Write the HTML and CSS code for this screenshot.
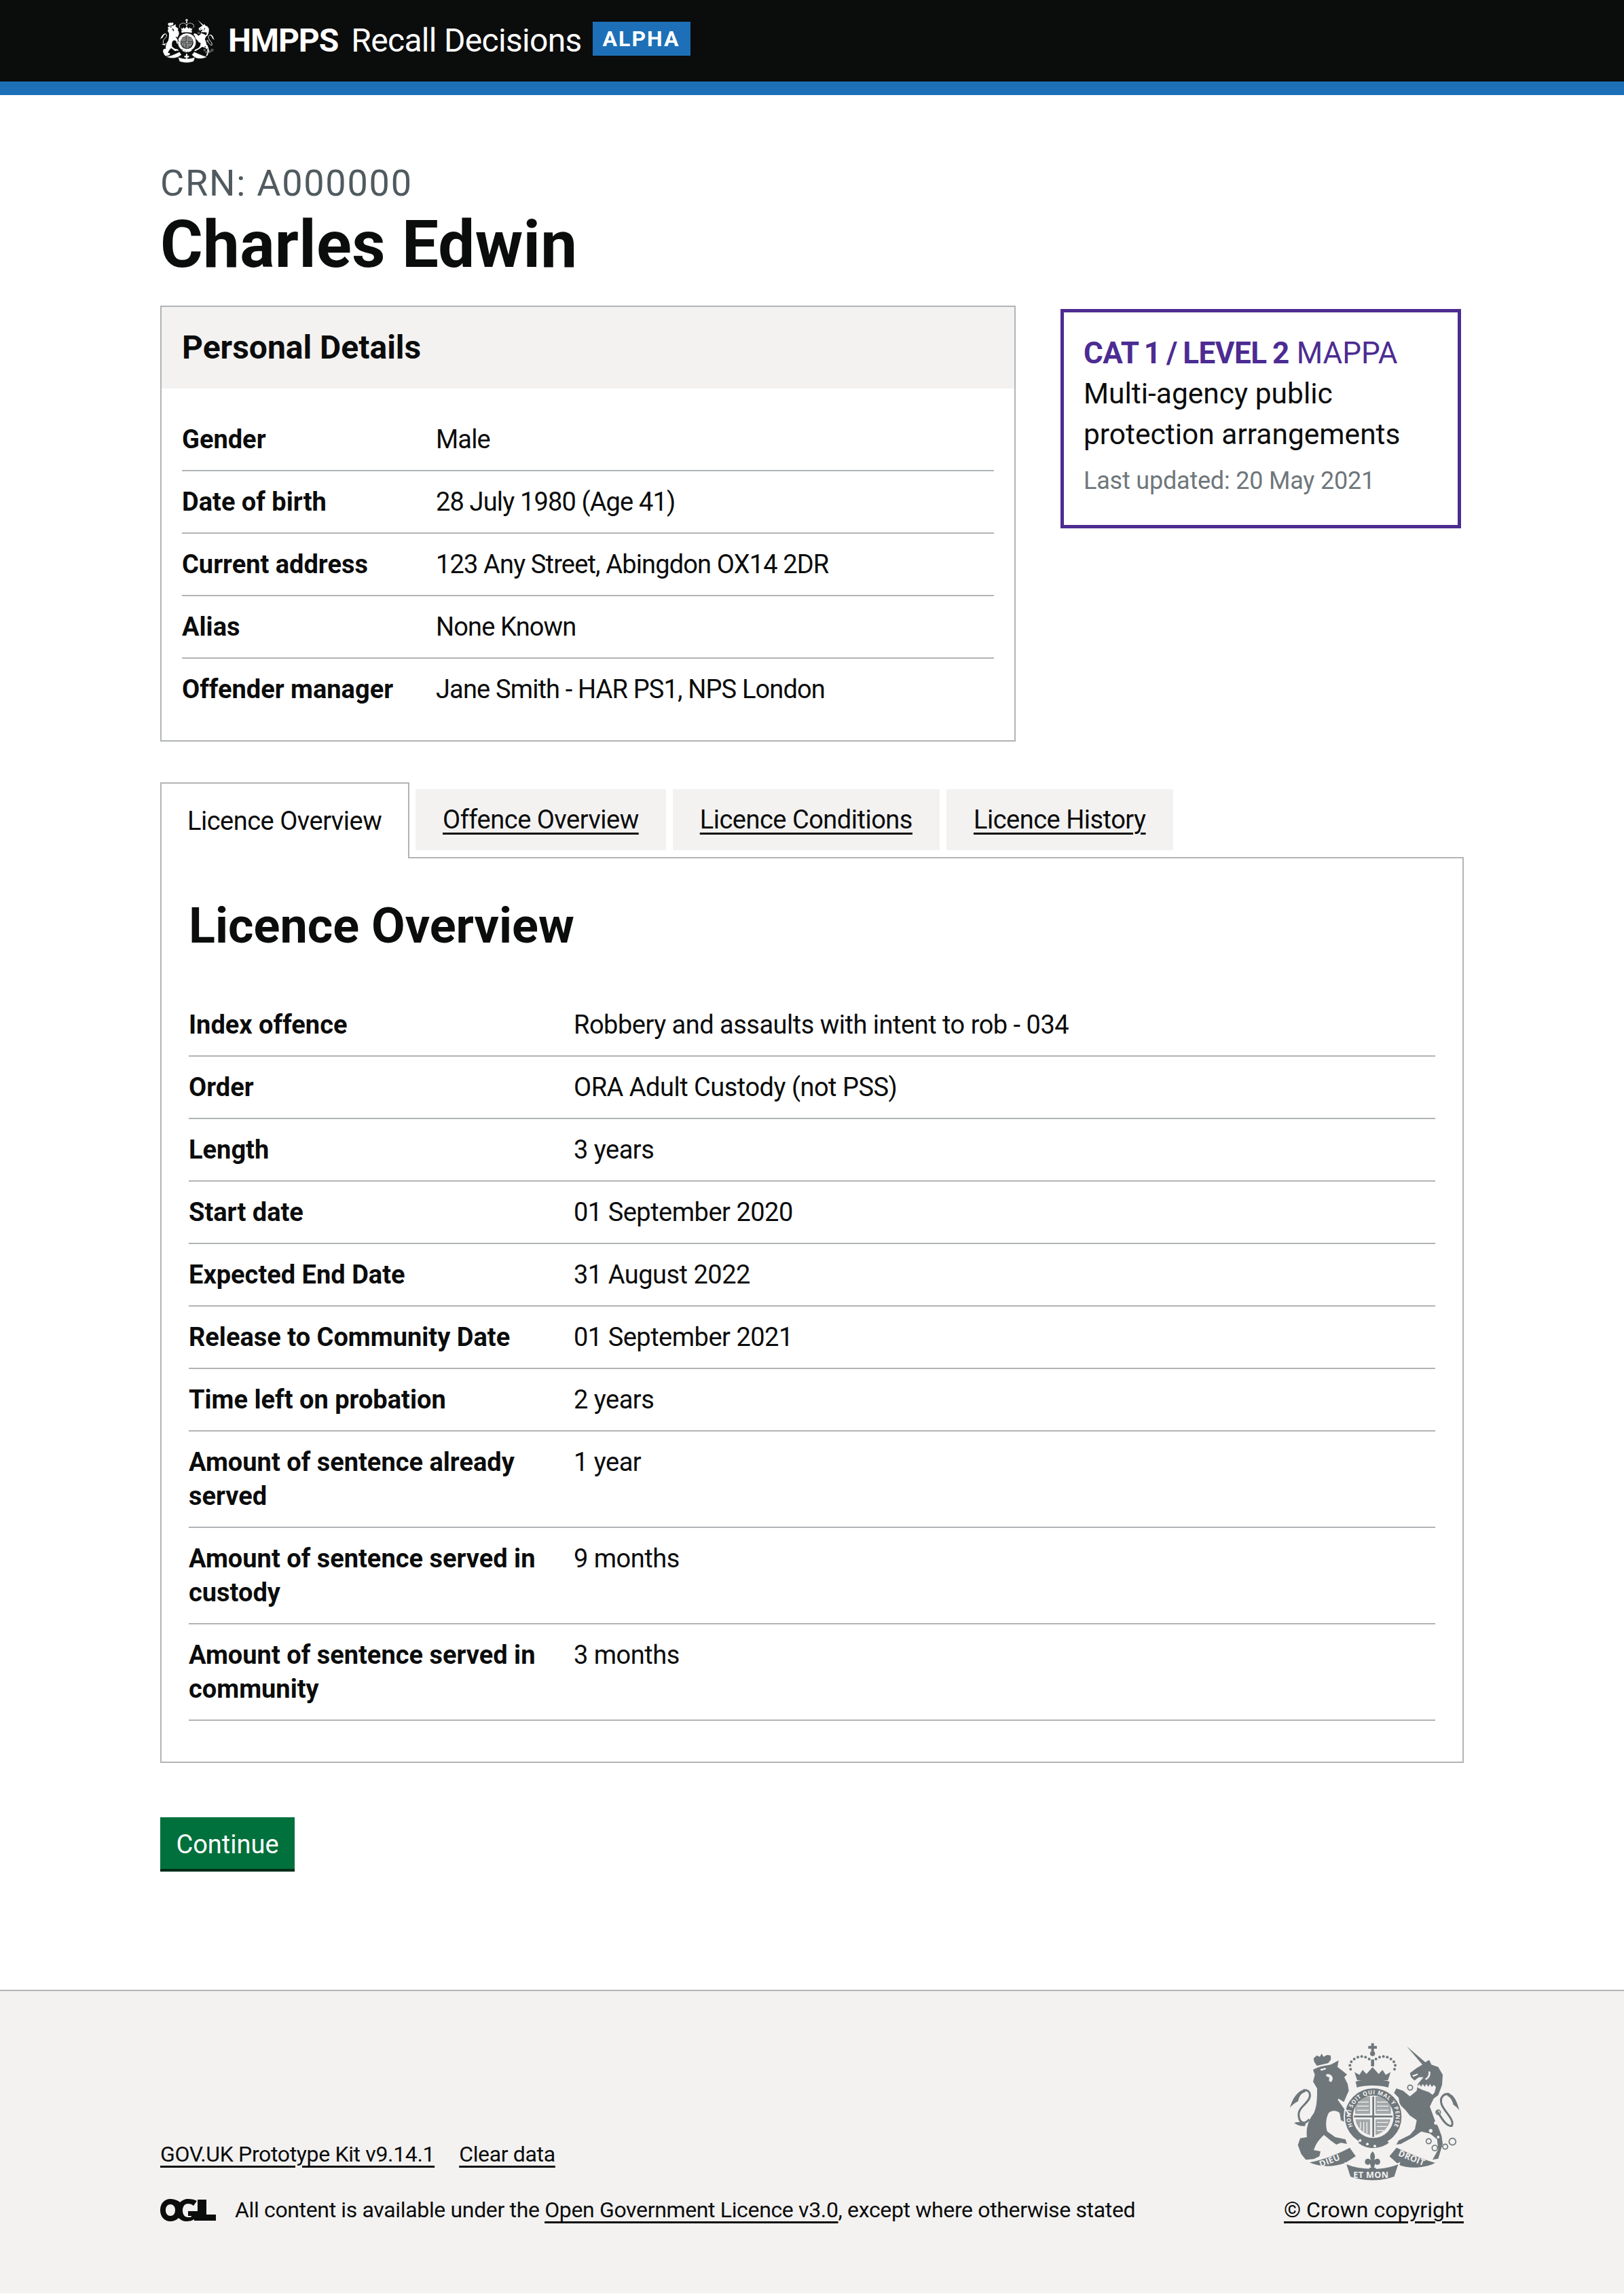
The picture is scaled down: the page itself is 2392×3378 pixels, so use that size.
FILE: index.html
```html
<!DOCTYPE html>
<html lang="en">
<head>
<meta charset="utf-8">
<title>Recall Decisions</title>
<link rel="stylesheet" href="styles.css">
</head>
<body>
<svg class="defs" width="0" height="0" aria-hidden="true">
  <defs>
    <symbol id="crest" viewBox="118 98 754 612">
      <g class="cf">
        <path d="M479 100h12v12h13v12h-13v12h-12v-12h-13v-12h13z"/>
        <circle cx="485" cy="146" r="11"/>
        <path d="M478 172h14v30h-14z"/>
        <path d="M405 228l22 12 14-22 17 18 27-30 27 30 17-18 14 22 22-12-12 36H417z"/>
        <path d="M410 270c40-14 110-14 150 0l-6 26c-30-12-108-12-138 0z"/>
        <g class="pearls">
          <circle cx="388" cy="215" r="6"/><circle cx="385" cy="198" r="6"/><circle cx="391" cy="182" r="6"/><circle cx="404" cy="170" r="6"/><circle cx="420" cy="162" r="6"/><circle cx="437" cy="159" r="6"/><circle cx="454" cy="162" r="6"/><circle cx="470" cy="170" r="6"/>
          <circle cx="500" cy="170" r="6"/><circle cx="516" cy="162" r="6"/><circle cx="533" cy="159" r="6"/><circle cx="550" cy="162" r="6"/><circle cx="566" cy="170" r="6"/><circle cx="579" cy="182" r="6"/><circle cx="585" cy="198" r="6"/><circle cx="582" cy="215" r="6"/>
        </g>
        <path d="M224 168l14-14 14 6 8-14 8 14 16-8 16 2 1 18-12 16-50 12-12-18z"/>
        <path d="M222 218c18-13 48-18 78-23l35-19-5 29 22 17 20 16-12 12 15 30 5 30c-10 20-15 35-22 50l-23-15 25 40 25 35 7 25-17 10-30-15-5-30c-10-15-40-15-50 0-10 20-15 50-5 80l35 25 45 10 7 20-27-5-20 8-25-18-30-25c-10 10-30 30-38 50l-7 17 30 6-5 22-25 12-35 3-20-25-15-40 10-30 30-5c-5-35 5-75 30-105 15-30 15-70 15-110l-18-30 8-30z"/>
        <path class="ln" d="M205 436c-20 26-42 16-46-12-6-38 32-50 46-80 9-22-2-40-26-36"/>
        <path d="M120 385c10-40 35-75 62-80l8 10c-22 6-30 22-34 42-14 6-26 16-36 28zM138 452c16-4 34-6 52 2l-4 12c-18 2-34-4-48-14z"/>
        <path d="M636 114l82 70 17-10 10 21 30 10 20 35-3 45-17 45-20 15-17 35 22 60 15 30 15 40 5 35-20 65-25 5 25-45-5-45-30-25-40-10-35 25-55 30-20 3 10-18 50-25 22-25 8-40-30-20-20-25-25-25-5-30-20-20 10-20 30 10 30 25 30-25 5-30 25-30-20 0-20 15-15-15-5-18 30-22 25-15z"/>
        <path class="ln" d="M770 400c20 30 40 70 65 65 15-25-35-65-45-95-10-30 10-50 35-45"/>
        <path d="M868 396c-8-34-22-68-46-74l-8 10c18 8 24 24 28 40 10 6 18 14 26 24z"/>
        <g class="ring">
          <circle cx="651" cy="296" r="11"/><circle cx="640" cy="380" r="11"/><circle cx="775" cy="405" r="10"/><circle cx="733" cy="533" r="11"/><circle cx="760" cy="563" r="12"/><circle cx="806" cy="557" r="11"/><circle cx="838" cy="535" r="15"/>
        </g>
        <circle class="halo" cx="488" cy="425" r="128"/>
        <path d="M430 530l115-2 12 12c-40 30-100 32-135 0z"/>
        <path class="halo" d="M195 625c70-10 130-35 190-67l30 42-50 32c-50 18-110 22-170-7z"/>
        <path class="halo" d="M770 628C720 615 660 590 590 558l-35 42 45 40c40 18 120 18 170-12z"/>
        <path class="halo" d="M365 630c70 30 170 30 238 0l-20 62c-60 22-140 22-198 0z"/>
        <path d="M485 578c14 14 12 28 6 40 6-8 26-14 28 6 0 14-16 18-22 8l-6 18h8v6h-8v8h-12v-8h-8v-6h8l-6-18c-6 10-22 6-22-8 2-20 22-14 28-6-6-12-8-26 6-40z"/>
      </g>
      <g class="cb">
        <path d="M253 215l24-6 3 6-22 7zM280 238c12-6 24 2 28 12 2 10-2 20-8 22l-8-6 2-14-14-6z"/>
        <path d="M335 345l52 72-6 3-50-70z"/>
        <path d="M660 243l24-9 2 5-20 10zM740 226c2 16-4 28-18 36l-6-4c14-8 18-18 16-34z"/>
        <path d="M675 280l10 10 6-10 8 12 8-12 8 12 8-12 8 12 8-12 8 14 8-10 10 10-6 24-9 10-16-12-30-10-20-10z"/>
        <circle cx="765" cy="452" r="8"/><circle cx="742" cy="487" r="8"/><circle cx="775" cy="515" r="6"/>
        <ellipse cx="488" cy="425" rx="90" ry="94"/>
        <circle cx="462" cy="546" r="6"/><circle cx="495" cy="555" r="6"/><circle cx="430" cy="530" r="6"/>
      </g>
      <g class="cf">
        <path d="M484 336h8v178h-8zM403 420h170v8H403z"/>
        <path d="M414 350c16-10 36-14 60-14v76h-66c-1-22 1-44 6-62zM498 336c26 0 46 4 62 14 5 18 7 40 6 62h-68zM409 436h65v70c-34-10-60-36-65-70zM498 436h66c-6 34-32 60-66 70z" opacity=".6"/>
      </g>
      <g class="cb">
        <path d="M420 358h48v4h-48zM416 376h52v4h-52zM416 394h52v4h-52zM504 358h48v4h-48zM504 376h52v4h-52zM504 394h52v4h-52zM504 448h50v4h-50zM504 466h44v4h-44zM504 484h30v4h-30zM430 448h4v30h-4zM444 448h4v44h-4zM458 448h4v50h-4z"/>
      </g>
    </symbol>
    <symbol id="crest-words" viewBox="118 98 754 612">
      <defs><path id="garter-path" d="M418 497a100 100 0 1 1 140 0"/></defs>
      <text class="garter-text"><textPath href="#garter-path" startOffset="50%" text-anchor="middle">HONI SOIT QUI MAL Y PENSE</textPath></text>
      <text class="motto" transform="translate(256 648) rotate(-21)">DIEU</text>
      <text class="motto" x="400" y="695">ET MON</text>
      <text class="motto" transform="translate(596 596) rotate(22)">DROIT</text>
    </symbol>
  </defs>
</svg>

<header class="site-header">
  <div class="container header-inner">
    <svg class="header-crest"><use href="#crest"/></svg>
    <span class="brand">HMPPS</span>
    <span class="service">Recall Decisions</span>
    <strong class="tag">ALPHA</strong>
  </div>
</header>

<main class="container main">
  <span class="caption">CRN: A000000</span>
  <h1 class="title">Charles Edwin</h1>

  <div class="top-row">
    <section class="details-card">
      <h2 class="details-head">Personal Details</h2>
      <dl class="summary summary-personal">
        <div class="row"><dt>Gender</dt><dd>Male</dd></div>
        <div class="row"><dt>Date of birth</dt><dd>28 July 1980 (Age 41)</dd></div>
        <div class="row"><dt>Current address</dt><dd>123 Any Street, Abingdon OX14 2DR</dd></div>
        <div class="row"><dt>Alias</dt><dd>None Known</dd></div>
        <div class="row last"><dt>Offender manager</dt><dd>Jane Smith - HAR PS1, NPS London</dd></div>
      </dl>
    </section>
    <aside class="mappa">
      <p class="mappa-title"><b>CAT 1 / LEVEL 2</b> MAPPA</p>
      <p class="mappa-text">Multi-agency public protection arrangements</p>
      <p class="mappa-date">Last updated: 20 May 2021</p>
    </aside>
  </div>

  <nav class="tabs">
    <span class="tab tab-selected">Licence Overview</span>
    <a class="tab" href="#offence">Offence Overview</a>
    <a class="tab" href="#conditions">Licence Conditions</a>
    <a class="tab" href="#history">Licence History</a>
  </nav>
  <section class="panel">
    <h2 class="panel-title">Licence Overview</h2>
    <dl class="summary summary-licence">
      <div class="row"><dt>Index offence</dt><dd>Robbery and assaults with intent to rob - 034</dd></div>
      <div class="row"><dt>Order</dt><dd>ORA Adult Custody (not PSS)</dd></div>
      <div class="row"><dt>Length</dt><dd>3 years</dd></div>
      <div class="row"><dt>Start date</dt><dd>01 September 2020</dd></div>
      <div class="row"><dt>Expected End Date</dt><dd>31 August 2022</dd></div>
      <div class="row"><dt>Release to Community Date</dt><dd>01 September 2021</dd></div>
      <div class="row"><dt>Time left on probation</dt><dd>2 years</dd></div>
      <div class="row"><dt>Amount of sentence already served</dt><dd>1 year</dd></div>
      <div class="row"><dt>Amount of sentence served in custody</dt><dd>9 months</dd></div>
      <div class="row"><dt>Amount of sentence served in community</dt><dd>3 months</dd></div>
    </dl>
  </section>
  <a class="button" href="#continue">Continue</a>
</main>

<footer class="footer">
  <div class="container footer-inner">
    <div class="footer-left">
      <ul class="footer-links">
        <li><a href="#kit">GOV.UK Prototype Kit v9.14.1</a></li>
        <li><a href="#clear">Clear data</a></li>
      </ul>
      <div class="licence">
        <svg class="ogl" viewBox="0 0 82 33" aria-label="OGL logo"><path fill-rule="evenodd" d="M15 0C6 0 0 7 0 16.500S6 33 15 33c5 0 9-2 12-5 3 3 7 5 12 5 4 0 8-1 11-3v2h32v-9H68V1H55v17H41v7h5v1c-1 1-3 1-5 1-5 0-8-4-8-10s3-10 8-10c3 0 6 1 8 3l5-7c-3-2-8-3-13-3-5 0-9 2-12 5-3-3-8-5-14-5zm0 8c4 0 7 3 7 8.500S19 25 15 25s-7-3-7-8.500S11 8 15 8z"/></svg>
        <span class="licence-text">All content is available under the <a href="#ogl">Open Government Licence v3.0</a>, except where otherwise stated</span>
      </div>
    </div>
    <div class="footer-right">
      <div class="footer-crest">
        <svg class="crest-layer"><use href="#crest"/></svg>
        <svg class="crest-layer crest-words"><use href="#crest-words"/></svg>
      </div>
      <a class="copyright" href="#crown">© Crown copyright</a>
    </div>
  </div>
</footer>
</body>
</html>
```
FILE: styles.css
```css
* { box-sizing: border-box; }
html, body { margin: 0; padding: 0; }
body {
  background: #fff;
  color: #0b0c0c;
  font-family: Roboto, "Liberation Sans", sans-serif;
  font-size: 38px;
  line-height: 50px;
  letter-spacing: -0.5px;
}
a { color: inherit; text-underline-offset: 6px; text-decoration-thickness: 3px; }
p, h1, h2, dl, dd, ul { margin: 0; padding: 0; }
.defs { position: absolute; }
.container { width: 1920px; margin: 0 auto; }

/* crest */
.cf { fill: var(--crest-fg); stroke: none; }
.cb { fill: var(--crest-bg); stroke: none; }
.cf .ln { fill: none; stroke: var(--crest-fg); stroke-width: 9; }
.cf .ring circle { fill: none; stroke: var(--crest-fg); stroke-width: 5; }
.cf .halo { stroke: var(--crest-bg); stroke-width: 6; }
.garter-text { font: 700 25px "Open Sans", sans-serif; fill: #f3f2f1; letter-spacing: 2px; }
.motto { font: 700 38px "Open Sans", sans-serif; fill: #f3f2f1; letter-spacing: 1px; }

/* header */
.site-header {
  background: #0b0c0c;
  border-bottom: 20px solid #1d70b8;
  height: 140px;
  color: #fff;
}
.header-inner { display: flex; align-items: center; height: 120px; }
.header-crest {
  --crest-fg: #fff;
  --crest-bg: #0b0c0c;
  width: 80px;
  height: 68px;
  margin-right: 20px;
  flex: none;
}
.brand { font-size: 48px; line-height: 50px; font-weight: 700; letter-spacing: -1px; margin-right: 19px; }
.service { font-size: 48px; line-height: 50px; font-weight: 400; letter-spacing: -0.7px; margin-right: 16px; }
.tag {
  background: #1d70b8;
  width: 144px;
  height: 50px;
  font-size: 32px;
  line-height: 50px;
  letter-spacing: 2px;
  text-align: center;
  font-weight: 700;
  margin-bottom: 6px;
}

/* page heading */
.main { padding-top: 100px; }
.caption { display: block; font-size: 54px; line-height: 60px; color: #505a5f; letter-spacing: 1.75px; }
.title { font-size: 96px; line-height: 100px; font-weight: 700; letter-spacing: 0.3px; margin-top: 10px; margin-bottom: 40px; }

/* top */
.top-row { display: flex; align-items: flex-start; justify-content: space-between; width: 1916px; }
.details-card { width: 1260px; border: 2px solid #b1b4b6; padding-bottom: 30px; }
.details-head {
  background: #f3f2f1;
  font-size: 48px;
  line-height: 60px;
  font-weight: 700;
  letter-spacing: 0;
  padding: 30px 30px;
  margin-bottom: 30px;
}
.summary .row { display: flex; border-bottom: 2px solid #b1b4b6; padding: 20px 0; }
.summary .row.last { border-bottom: 0; padding-bottom: 20px; }
.summary dt { font-weight: 700; letter-spacing: 0; }
.summary-personal { margin: 0 30px; }
.summary-personal dt { width: 374px; flex: none; }
.summary-personal dd { letter-spacing: -0.85px; }
.summary-licence dt { width: 567px; flex: none; padding-right: 30px; }

.mappa {
  width: 590px;
  height: 323px;
  margin-top: 5px;
  border: 5px solid #4c2c92;
  padding: 30px 29px;
  line-height: 60px;
  letter-spacing: 0;
}
.mappa-title { color: #4c2c92; font-size: 44px; }
.mappa-title b { letter-spacing: -0.5px; word-spacing: -2px; }
.mappa-text { font-size: 42.5px; }
.mappa-date { color: #6f777b; font-size: 36px; letter-spacing: -0.2px; margin-top: 8px; }

/* tabs */
.tabs { display: flex; align-items: flex-start; gap: 10px; margin-top: 60px; height: 110px; position: relative; z-index: 1; }
.tab {
  display: block;
  background: #f3f2f1;
  margin-top: 10px;
  height: 90px;
  padding: 20px 40px;
  letter-spacing: -0.5px;
  text-decoration-line: underline;
}
.tab-selected {
  background: #fff;
  margin-top: 0;
  height: 112px;
  width: 367px;
  padding: 30px 38px;
  border: 2px solid #b1b4b6;
  border-bottom: 0;
  text-decoration: none;
  margin-right: -1px;
}
.panel { border: 2px solid #b1b4b6; padding: 62px 40px 60px; }
.panel-title { font-size: 72px; line-height: 76px; font-weight: 700; letter-spacing: 0; margin-bottom: 62px; }

.button {
  display: block;
  width: 198px;
  margin-top: 80px;
  background: #00703c;
  box-shadow: 0 4px 0 #002d18;
  color: #fff;
  padding: 15px 0 11px;
  text-align: center;
  line-height: 50px;
  height: 76px;
  text-decoration: none;
  letter-spacing: 0;
}

/* footer */
.footer {
  margin-top: 178px;
  background: #f3f2f1;
  border-top: 2px solid #b1b4b6;
  height: 447px;
  font-size: 32px;
  line-height: 40px;
  letter-spacing: -0.35px;
}
.footer-inner { display: flex; justify-content: space-between; align-items: flex-end; padding-top: 76px; }
.footer-links { display: flex; list-style: none; gap: 36px; margin-bottom: 42px; }
.licence { display: flex; align-items: center; gap: 28px; }
.ogl { width: 82px; height: 33px; flex: none; fill: #0b0c0c; }
.footer-right { display: flex; flex-direction: column; align-items: flex-end; }
.footer-crest {
  --crest-fg: #6f777b;
  --crest-bg: #f3f2f1;
  position: relative;
  width: 252px;
  height: 204px;
  margin-right: 5px;
  margin-bottom: 22px;
}
.crest-layer { display: block; width: 252px; height: 204px; }
.crest-words { position: absolute; left: 0; top: 0; }
.copyright { letter-spacing: 0; }
```
